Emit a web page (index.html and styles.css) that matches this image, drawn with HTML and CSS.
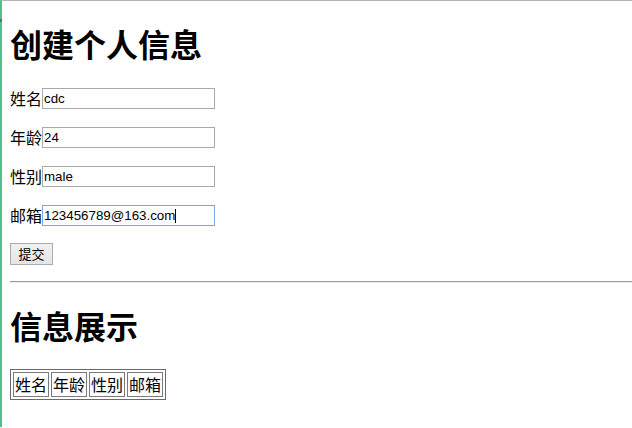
FILE: index.html
```html
<!DOCTYPE html>
<html lang="zh">
<head>
<meta charset="utf-8">
<title>创建个人信息</title>
<link rel="stylesheet" href="styles.css">
</head>
<body>
<div class="frame">
  <span class="frame-mark"></span>
  <div class="page">
    <h1 class="title">创建个人信息</h1>
    <form class="form">
      <p class="row"><label class="label">姓名</label><input class="field" type="text" value="cdc"></p>
      <p class="row"><label class="label">年龄</label><input class="field" type="text" value="24"></p>
      <p class="row"><label class="label">性别</label><input class="field" type="text" value="male"></p>
      <p class="row"><label class="label">邮箱</label><span class="field-wrap"><input class="field field-focus" type="text" value="123456789@163.com"><span class="caret"></span></span></p>
      <p class="row"><button class="submit" type="button">提交</button></p>
    </form>
    <hr class="rule">
    <h1 class="title title-second">信息展示</h1>
    <table class="grid">
      <tr><td class="cell">姓名</td><td class="cell">年龄</td><td class="cell">性别</td><td class="cell">邮箱</td></tr>
    </table>
  </div>
</div>
</body>
</html>
```

FILE: styles.css
```css
html, body {
  margin: 0;
  padding: 0;
  background: #fff;
}

body {
  font-family: "Noto Sans CJK SC", "Liberation Sans", sans-serif;
  color: #000;
  overflow: hidden;
}

.frame {
  position: relative;
  border-top: 1px solid #b4b4b4;
  border-left: 2px solid #4cc08e;
  min-height: 427px;
  box-sizing: border-box;
}

.frame-mark {
  position: absolute;
  left: -2px;
  top: 18px;
  width: 2px;
  height: 3px;
  background: #6b6b6b;
}

.page {
  padding: 8px 0 0 8px;
}

.title {
  margin: 11px 0 21px;
  font-size: 32px;
  line-height: 46px;
  font-weight: bold;
}

.title-second {
  margin-top: 19px;
}

.form {
  margin: 0;
}

.row {
  display: flex;
  align-items: center;
  height: 23px;
  margin: 0 0 16px;
}

.row:last-child {
  margin-bottom: 0;
}

.label {
  font-size: 16px;
  line-height: 23px;
}

.field-wrap {
  position: relative;
  display: flex;
}

.field {
  box-sizing: border-box;
  width: 173px;
  height: 21px;
  margin: 0;
  padding: 0 1px;
  border: 1px solid #a9a9a9;
  font-family: "Liberation Sans", Arial, sans-serif;
  font-size: 13.33px;
  color: #000;
  background: #fff;
  outline: none;
}

.field-focus {
  border-color: #7ea6e6;
}

.caret {
  position: absolute;
  left: 133px;
  top: 4px;
  width: 1px;
  height: 14px;
  background: #000;
}

.submit {
  box-sizing: border-box;
  width: 43px;
  height: 22px;
  margin: -2px 0 0;
  padding: 0;
  border: 1px solid #acacac;
  border-radius: 0;
  background: linear-gradient(#f0f0f0, #e5e5e5);
  font-family: "Noto Sans CJK SC", sans-serif;
  font-size: 13px;
  color: #000;
}

.rule {
  margin: 15px 0 0;
  height: 0;
  border: 0;
  border-top: 1px solid #9a9a9a;
  border-bottom: 1px solid #eeeeee;
}

.grid {
  border: 1px solid #6a6a6a;
  border-spacing: 2px;
}

.cell {
  border: 1px solid #7a7a7a;
  padding: 1px;
  font-size: 16px;
  line-height: 21px;
}
```
